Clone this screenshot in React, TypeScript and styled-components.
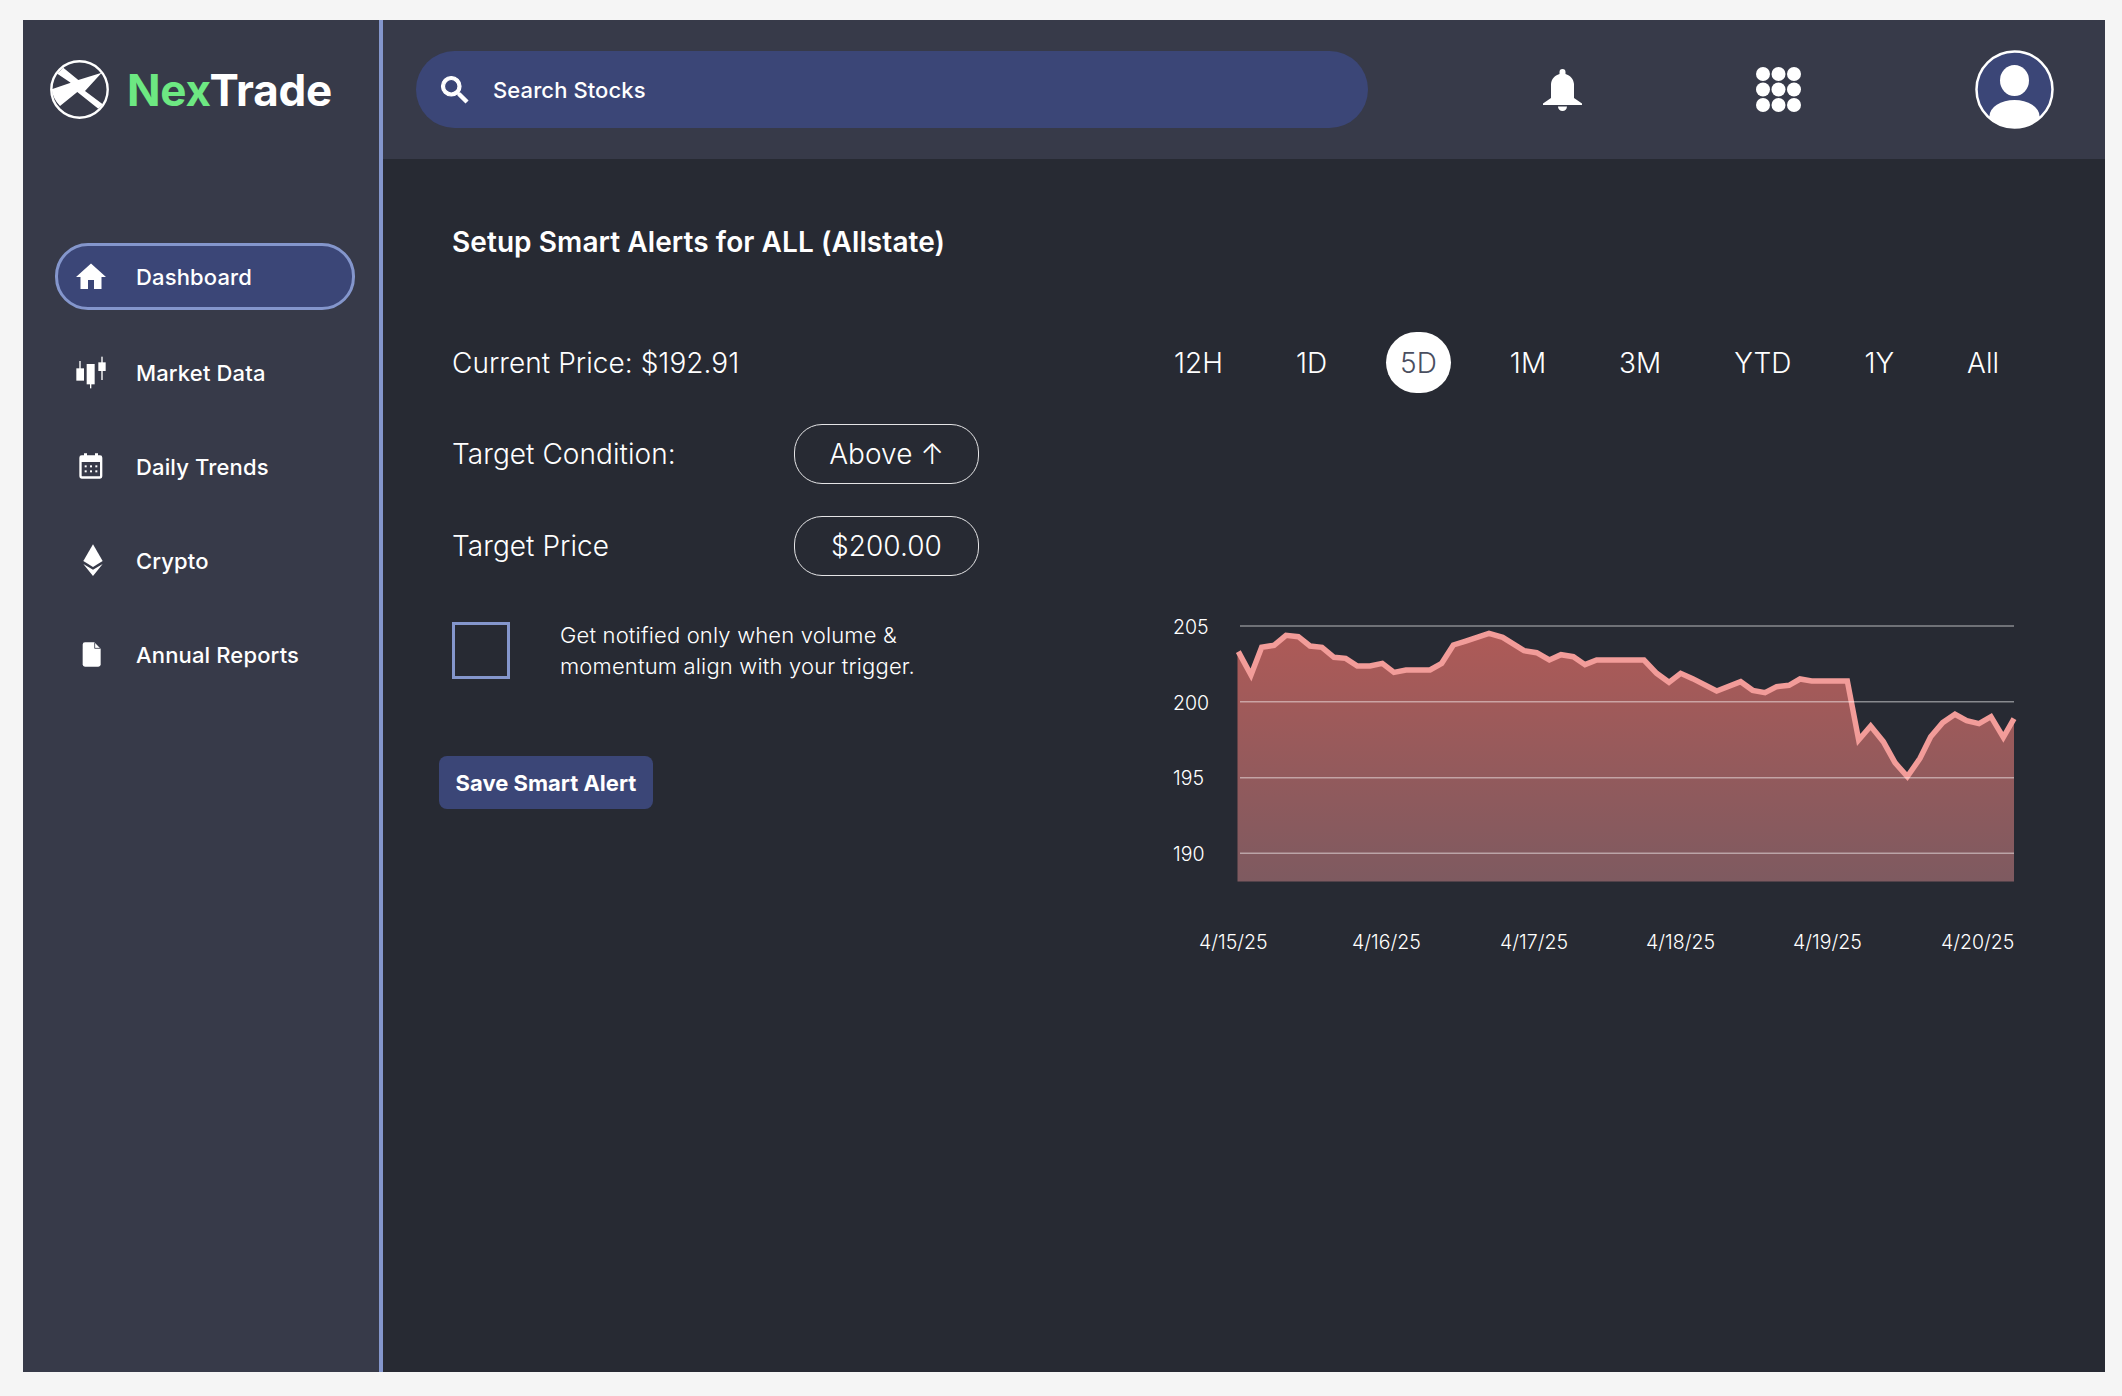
import React from "react";
import styled, { createGlobalStyle } from "styled-components";

const Global = createGlobalStyle`
  html, body { margin: 0; padding: 0; background: #f5f5f5; }
  body { font-family: Inter, "Noto Sans", sans-serif; color: #fff; }
  * { box-sizing: border-box; }
`;

const Page = styled.div`
  width: 2122px;
  height: 1396px;
  padding: 20px 17px 24px 23px;
  overflow: hidden;
`;
const Frame = styled.div`
  display: flex;
  height: 100%;
  background: #272a33;
`;
const Sidebar = styled.aside`
  flex: 0 0 360px;
  background: #373a49;
  border-right: 4px solid #8496cc;
  padding: 40px 0 0 26px;
`;
const Brand = styled.div`
  display: flex;
  align-items: center;
  gap: 18px;
  height: 59px;
`;
const BrandName = styled.div`
  font-size: 44px;
  font-weight: 700;
  letter-spacing: -0.2px;
  color: #fff;
  span { color: #6de882; }
`;
const Nav = styled.nav`
  display: flex;
  flex-direction: column;
  gap: 27px;
  margin: 124px 0 0 6px;
`;
const NavItem = styled.div<{ $active?: boolean }>`
  width: 300px;
  height: 67px;
  display: flex;
  align-items: center;
  gap: 27px;
  padding-left: 15px;
  border-radius: 33px;
  border: 3px solid ${(p) => (p.$active ? "#8496cc" : "transparent")};
  background: ${(p) => (p.$active ? "#3b4677" : "transparent")};
  margin-bottom: ${(p) => (p.$active ? "2px" : "0")};
  font-size: 22px;
  font-weight: 500;
  letter-spacing: 0.15px;
  svg { flex: 0 0 36px; width: 36px; height: 36px; fill: #fff; }
`;
const Main = styled.main`
  flex: 1;
  display: flex;
  flex-direction: column;
  min-width: 0;
`;
const Header = styled.header`
  height: 139px;
  background: #373a49;
  display: flex;
  align-items: center;
  gap: 175px;
  padding-left: 33px;
`;
const Search = styled.div`
  width: 952px;
  height: 77px;
  border-radius: 38.5px;
  background: #3b4677;
  display: flex;
  align-items: center;
  gap: 20px;
  padding-left: 21px;
  font-size: 22px;
  font-weight: 500;
  letter-spacing: 0.1px;
  svg { width: 36px; height: 36px; fill: #fff; stroke: #fff; stroke-width: 0.8; }
`;
const HeaderIcon = styled.svg<{ $shift?: number }>`
  flex: none;
  display: block;
  fill: #fff;
  margin-left: ${(p) => p.$shift ?? 0}px;
`;
const Content = styled.section`
  flex: 1;
  padding: 66px 0 0 69px;
`;
const Title = styled.h1`
  margin: 0 0 73px;
  font-size: 28px;
  line-height: 34px;
  font-weight: 600;
  letter-spacing: 0.08px;
`;
const Columns = styled.div`
  display: flex;
`;
const Form = styled.div`
  flex: 0 0 706px;
  display: flex;
  flex-direction: column;
`;
const Row = styled.div<{ $gap?: number }>`
  display: flex;
  align-items: center;
  height: 61px;
  margin-bottom: ${(p) => p.$gap ?? 30}px;
  font-size: 28px;
  font-weight: 300;
  letter-spacing: 0.05px;
`;
const Label = styled.div`
  flex: 0 0 342px;
`;
const Pill = styled.div`
  width: 185px;
  height: 60px;
  border: 1.5px solid #e4e4e6;
  border-radius: 28px;
  display: flex;
  align-items: center;
  justify-content: center;
  font-size: 28px;
  font-weight: 300;
`;
const CheckRow = styled.div`
  display: flex;
  gap: 50px;
  align-items: flex-start;
`;
const Checkbox = styled.div`
  flex: none;
  width: 58px;
  height: 57px;
  margin-top: 2px;
  border: 3px solid #8496cc;
`;
const CheckText = styled.div`
  font-size: 22px;
  line-height: 31px;
  font-weight: 300;
  letter-spacing: 0.17px;
`;
const SaveButton = styled.button`
  align-self: flex-start;
  margin: 74px 0 0 -13px;
  width: 214px;
  height: 53px;
  border: 0;
  border-radius: 8px;
  background: #3b4677;
  color: #fff;
  font-family: inherit;
  font-size: 22px;
  font-weight: 700;
  padding: 0;
`;
const ChartColumn = styled.div`
  flex: 0 0 872px;
  display: flex;
  flex-direction: column;
`;
const Tabs = styled.div`
  display: flex;
  gap: 45px;
  margin-left: 2px;
`;
const Tab = styled.div<{ $active?: boolean }>`
  height: 61px;
  padding: 0 14px;
  display: flex;
  align-items: center;
  border-radius: 30.5px;
  font-size: 28px;
  font-weight: 300;
  background: ${(p) => (p.$active ? "#fff" : "transparent")};
  color: ${(p) => (p.$active ? "#4a4e60" : "#fff")};
`;
const ChartSvg = styled.svg`
  display: block;
  margin-top: 217px;
  width: 872px;
  height: 350px;
  font-family: Inter, sans-serif;
  font-size: 19.5px;
  font-weight: 300;
  fill: #fff;
`;

const z5 = (p: number[]) => `${1150 + p[0] / 3},${600 + p[1] / 3}`;
const z6 = (p: number[]) => `${1620 + p[0] / 3},${600 + p[1] / 3}`;
const left = [[265,155],[303,225],[335,142],[372,136],[408,106],[445,110],[480,138],[516,142],[552,172],[587,175],[622,198],[660,198],[697,190],[732,217],[768,210],[840,210],[875,190],[910,135],[945,124],[1017,100],[1058,112],[1122,152],[1160,158],[1198,180],[1233,164],[1270,170],[1305,194],[1340,180],[1440,180]];
const right = [[72,180],[110,220],[147,247],[182,220],[218,236],[290,273],[362,245],[398,271],[435,278],[470,260],[507,256],[540,237],[575,243],[682,243],[716,420],[752,378],[790,425],[825,488],[862,530],[900,475],[932,410],[968,368],[1005,343],[1040,362],[1077,371],[1113,350],[1150,412],[1182,356]];
const linePoints = [...left.map(z5), ...right.map(z6)].join(" ");
const areaPoints = `1237.5,881.5 1237.5,651.7 ${[...left.slice(1).map(z5), ...right.map(z6)].join(" ")} 2014,881.5`;

const Chart = () => (
  <ChartSvg viewBox="1158 610 872 350">
    <defs>
      <linearGradient id="area" x1="0" y1="0" x2="0" y2="1">
        <stop offset="0" stopColor="#ae5a57" />
        <stop offset="1" stopColor="#7e5a60" />
      </linearGradient>
    </defs>
    <polygon points={areaPoints} fill="url(#area)" />
    <polyline points={linePoints} fill="none" stroke="#f29c99" strokeWidth="5.5" strokeLinejoin="miter" />
    {[626, 701.7, 777.7, 853.3].map((y) => (
      <line key={y} x1="1240" x2="2014" y1={y} y2={y} stroke="#fff" strokeOpacity="0.45" strokeWidth="1.5" />
    ))}
    {[["205", 627], ["200", 702.5], ["195", 778], ["190", 854]].map(([t, y]) => (
      <text key={t} x="1173" y={y} dominantBaseline="central">{t}</text>
    ))}
    {[["4/15/25", 1199], ["4/16/25", 1352], ["4/17/25", 1500], ["4/18/25", 1646], ["4/19/25", 1793], ["4/20/25", 1941]].map(([t, x]) => (
      <text key={t} x={x} y="942" dominantBaseline="central">{t}</text>
    ))}
  </ChartSvg>
);

const Logo = () => (
  <HeaderIcon width="59" height="59" viewBox="0 0 59 59" $shift={1}>
    <circle cx="29.5" cy="29.5" r="28.2" fill="none" stroke="#fff" strokeWidth="2.4" />
    <path d="M13.3 7.7L28.3 20L51.7 12.7L35 31L52.7 44.3L48.3 48.7L27.3 32L10 46A28 28 0 0 1 1.7 29.3L20.7 22.7L7.3 13.7Z" />
  </HeaderIcon>
);

const HomeIcon = () => (
  <svg viewBox="0 0 24 24"><path d="M10 20v-6h4v6h5v-8h3L12 3 2 12h3v8z" /></svg>
);
const CandleIcon = () => (
  <svg viewBox="219 75 108 108">
    <rect x="229" y="115" width="23" height="37" />
    <rect x="238" y="93" width="4" height="24" />
    <rect x="260" y="102" width="24" height="61" />
    <rect x="270" y="160" width="4" height="15" />
    <rect x="295" y="97" width="22" height="26" />
    <rect x="304" y="80" width="4" height="70" />
  </svg>
);
const CalendarIcon = () => (
  <svg viewBox="219 357 108 108">
    <path fillRule="evenodd" d="M252 370h9v6h24v-6h9v6h6a7 7 0 0 1 7 7v56a7 7 0 0 1-7 7h-55a7 7 0 0 1-7-7v-56a7 7 0 0 1 7-7h7zM245 396v41a2 2 0 0 0 2 2h51a2 2 0 0 0 2-2v-41z" />
    {[257, 273, 289].flatMap((x) => [409, 424].map((y) => <rect key={`${x}${y}`} x={x - 3} y={y - 3} width="6" height="6" />))}
  </svg>
);
const EthIcon = () => (
  <svg viewBox="219 639 108 108">
    <polygon points="279,643 250,693 279,711 308,693" />
    <polygon points="250,702 279,719 308,702 279,738" />
  </svg>
);
const DocIcon = () => (
  <svg viewBox="219 921 108 108">
    <path d="M255 937H283L302 956V1003a7 7 0 0 1-7 7H255a7 7 0 0 1-7-7V944a7 7 0 0 1 7-7Z" />
    <path d="M284 938V955H301" fill="none" stroke="#373a49" strokeWidth="2.5" />
  </svg>
);
const SearchIcon = () => (
  <svg viewBox="0 0 24 24"><path d="M15.5 14h-.79l-.28-.27A6.471 6.471 0 0 0 16 9.5 6.5 6.5 0 1 0 9.5 16c1.61 0 3.09-.59 4.23-1.57l.27.28v.79l5 4.99L20.49 19l-4.99-5zm-6 0C7.01 14 5 11.99 5 9.5S7.01 5 9.5 5 14 7.01 14 9.5 11.99 14 9.5 14z" /></svg>
);
const Bell = () => (
  <HeaderIcon width="39" height="43" viewBox="0 0 39 43">
    <path d="M19.5 1a3 3 0 0 1 3 3v2c5 1.5 8 5 8.5 10v14l8 5.5v1.5H0v-1.5L8 30V16c.5-5 3.5-8.5 8.5-10V4a3 3 0 0 1 3-3z" />
    <path d="M15 38.6h9a4.5 4.4 0 0 1-9 0z" />
  </HeaderIcon>
);
const Dots = () => (
  <HeaderIcon width="45" height="45" viewBox="0 0 45 45" $shift={-1}>
    {[7, 22.5, 38].flatMap((x) => [7, 22.5, 38].map((y) => <circle key={`${x}-${y}`} cx={x} cy={y} r="7" />))}
  </HeaderIcon>
);
const Avatar = () => (
  <HeaderIcon width="79" height="79" viewBox="0 0 79 79" $shift={-1}>
    <defs><clipPath id="av"><circle cx="39.5" cy="39.5" r="38" /></clipPath></defs>
    <circle cx="39.5" cy="39.5" r="38" fill="#3b4677" />
    <g clipPath="url(#av)">
      <ellipse cx="39.5" cy="30.5" rx="14.5" ry="15.5" />
      <ellipse cx="39.5" cy="66" rx="25" ry="16" />
      <rect x="14.5" y="66" width="50" height="14" />
    </g>
    <circle cx="39.5" cy="39.5" r="38" fill="none" stroke="#fff" strokeWidth="2.5" />
  </HeaderIcon>
);

const nav = [
  { label: "Dashboard", icon: <HomeIcon />, active: true },
  { label: "Market Data", icon: <CandleIcon /> },
  { label: "Daily Trends", icon: <CalendarIcon /> },
  { label: "Crypto", icon: <EthIcon /> },
  { label: "Annual Reports", icon: <DocIcon /> },
];
const ranges = ["12H", "1D", "5D", "1M", "3M", "YTD", "1Y", "All"];

export default function App() {
  return (
    <Page>
      <Global />
      <Frame>
        <Sidebar>
          <Brand>
            <Logo />
            <BrandName><span>Nex</span>Trade</BrandName>
          </Brand>
          <Nav>
            {nav.map((n) => (
              <NavItem key={n.label} $active={n.active}>
                {n.icon}
                {n.label}
              </NavItem>
            ))}
          </Nav>
        </Sidebar>
        <Main>
          <Header>
            <Search><SearchIcon />Search Stocks</Search>
            <Bell />
            <Dots />
            <Avatar />
          </Header>
          <Content>
            <Title>Setup Smart Alerts for ALL (Allstate)</Title>
            <Columns>
              <Form>
                <Row>Current Price: $192.91</Row>
                <Row $gap={31}>
                  <Label>Target Condition:</Label>
                  <Pill>Above ↑</Pill>
                </Row>
                <Row $gap={44}>
                  <Label>Target Price</Label>
                  <Pill>$200.00</Pill>
                </Row>
                <CheckRow>
                  <Checkbox />
                  <CheckText>
                    Get notified only when volume &amp;<br />
                    momentum align with your trigger.
                  </CheckText>
                </CheckRow>
                <SaveButton>Save Smart Alert</SaveButton>
              </Form>
              <ChartColumn>
                <Tabs>
                  {ranges.map((r) => (
                    <Tab key={r} $active={r === "5D"}>{r}</Tab>
                  ))}
                </Tabs>
                <Chart />
              </ChartColumn>
            </Columns>
          </Content>
        </Main>
      </Frame>
    </Page>
  );
}
